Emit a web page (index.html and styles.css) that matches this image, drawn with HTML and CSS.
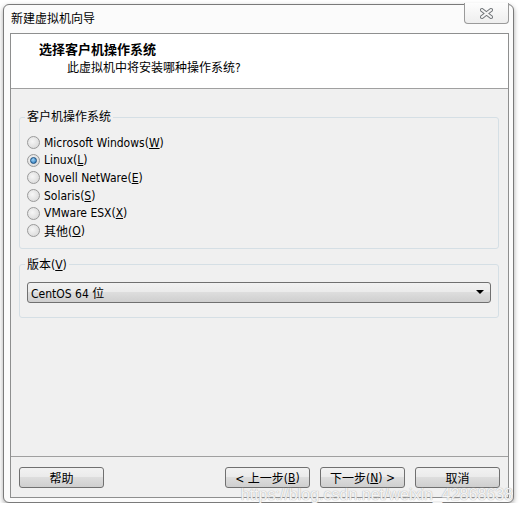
FILE: index.html
```html
<!DOCTYPE html>
<html lang="zh-CN">
<head>
    <meta charset="UTF-8">
    <meta name="viewport" content="width=device-width, initial-scale=1.0">
    <title>新建虚拟机向导</title>
    <link rel="stylesheet" href="styles.css">
</head>
<body>
    <div class="window">
        <div class="titlebar">
            <span class="title">新建虚拟机向导</span>
            <div class="close">
                <svg width="13" height="11" viewBox="0 0 13 11">
                    <path d="M2 2 L11 9 M11 2 L2 9" stroke="#707478" stroke-width="4" stroke-linecap="square"/>
                    <path d="M2 2 L11 9 M11 2 L2 9" stroke="#f4f4f4" stroke-width="2" stroke-linecap="square"/>
                </svg>
            </div>
        </div>
        <div class="client">
            <div class="header">
                <div class="heading">选择客户机操作系统</div>
                <div class="subheading">此虚拟机中将安装哪种操作系统?</div>
            </div>
            <div class="content">
                <fieldset class="group os-group">
                    <legend>客户机操作系统</legend>
                    <div class="radio"><span class="dot"></span>Microsoft Windows(<u>W</u>)</div>
                    <div class="radio checked"><span class="dot"></span>Linux(<u>L</u>)</div>
                    <div class="radio"><span class="dot"></span>Novell NetWare(<u>E</u>)</div>
                    <div class="radio"><span class="dot"></span>Solaris(<u>S</u>)</div>
                    <div class="radio"><span class="dot"></span>VMware ESX(<u>X</u>)</div>
                    <div class="radio"><span class="dot"></span>其他(<u>O</u>)</div>
                </fieldset>
                <fieldset class="group version-group">
                    <legend>版本(<u>V</u>)</legend>
                    <div class="select">
                        <span>CentOS 64 位</span>
                        <span class="arrow"></span>
                    </div>
                </fieldset>
            </div>
            <div class="footer">
                <div class="btn">帮助</div>
                <div class="spacer"></div>
                <div class="btn">&lt; 上一步(<u>B</u>)</div>
                <div class="btn">下一步(<u>N</u>) &gt;</div>
                <div class="btn">取消</div>
            </div>
        </div>
        <div class="watermark">https://blog.csdn.net/weixin_42868638</div>
    </div>
</body>
</html>
```

FILE: styles.css
```css
body {
    margin: 0;
    padding: 4px 0 0 3px;
    background: #fff;
    font-family: "DejaVu Sans Condensed", "DejaVu Sans", "Noto Sans CJK SC", sans-serif;
    font-stretch: condensed;
    font-size: 12px;
    color: #000;
}
.window {
    position: relative;
    width: 509px;
    height: 497px;
    border: 1px solid #7a7a7a;
    border-radius: 6px;
    background: #fbfbfb;
    box-shadow: 0 2px 5px rgba(0, 0, 0, 0.35);
    display: flex;
    flex-direction: column;
}
.titlebar {
    height: 28px;
    display: flex;
    align-items: flex-start;
    padding-left: 7px;
}
.title {
    margin-top: 6px;
    line-height: 16px;
}
.close {
    margin-left: auto;
    margin-right: 4px;
    margin-top: -2px;
    width: 43px;
    height: 20px;
    border: 1px solid #9a9a9a;
    border-top: none;
    border-radius: 0 0 4px 4px;
    background: linear-gradient(#fdfdfd, #eeeeee);
    display: flex;
    justify-content: center;
    align-items: center;
}
.client {
    margin: 0 4px 4px 6px;
    flex: 1;
    border: 1px solid #8e8f8f;
    background: #f0f0f0;
    display: flex;
    flex-direction: column;
}
.header {
    background: #fff;
    border-bottom: 1px solid #a0a0a0;
    padding-top: 8px;
    box-sizing: border-box;
    height: 55px;
}
.heading {
    padding-left: 28px;
    font-weight: bold;
    font-size: 13px;
    line-height: 16px;
}
.subheading {
    padding-left: 56px;
    margin-top: 2px;
    line-height: 16px;
}
.content {
    flex: 1;
    padding: 20px 9px 0 8px;
}
.group {
    margin: 0;
    border: 1px solid #d5dfe5;
    border-radius: 3px;
    padding: 0 7px;
    min-width: 0;
}
.group legend {
    padding: 0 2px;
    margin-left: -2px;
    line-height: 16px;
}
.os-group {
    padding-top: 9px;
    padding-bottom: 8px;
}
.radio {
    height: 17.6px;
    display: flex;
    align-items: center;
}
.dot {
    width: 11px;
    height: 11px;
    margin-right: 4px;
    border: 1px solid #9a9a9a;
    border-radius: 50%;
    background: radial-gradient(circle at 40% 40%, #f6f6f6, #d4d4d4);
    display: flex;
    justify-content: center;
    align-items: center;
}
.checked .dot::after {
    content: "";
    width: 5px;
    height: 5px;
    border-radius: 50%;
    border: 1px solid #1c4f7e;
    background: radial-gradient(circle at 40% 35%, #9ed3f7, #1f6fb5);
}
.version-group {
    margin-top: 8px;
    padding-top: 9px;
    padding-bottom: 14px;
}
.select {
    height: 19px;
    border: 1px solid #707070;
    border-radius: 3px;
    background: linear-gradient(#f2f2f2 0%, #ebebeb 45%, #dddddd 50%, #cfcfcf 100%);
    display: flex;
    align-items: center;
    padding: 0 6px 0 3px;
}
.arrow {
    margin-left: auto;
    width: 0;
    height: 0;
    border-left: 4px solid transparent;
    border-right: 4px solid transparent;
    border-top: 4px solid #000;
}
.footer {
    border-top: 1px solid #a0a0a0;
    display: flex;
    gap: 10px;
    padding: 10px 8px 9px;
}
.spacer {
    flex: 1;
}
.btn {
    width: 83px;
    height: 19px;
    border: 1px solid #707070;
    border-radius: 3px;
    background: linear-gradient(#f2f2f2 0%, #ebebeb 45%, #dddddd 50%, #cfcfcf 100%);
    display: flex;
    justify-content: center;
    align-items: center;
}
.watermark {
    position: absolute;
    right: 0;
    bottom: -2px;
    font-family: "Liberation Sans", sans-serif;
    font-stretch: normal;
    font-size: 16px;
    color: rgba(255, 255, 255, 0.85);
    text-shadow: 0 0 1px #b8b8b8, 0 0 1px #b8b8b8;
}
```
